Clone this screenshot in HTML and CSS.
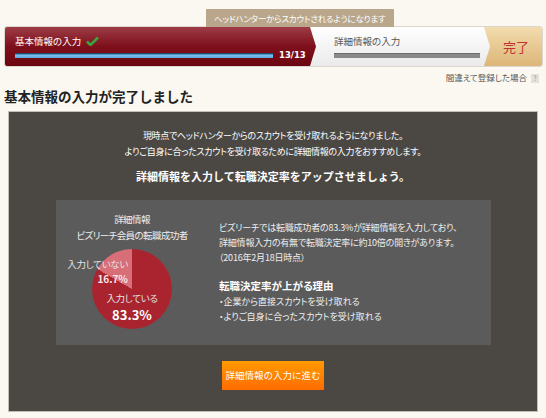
FILE: index.html
```html
<!DOCTYPE html>
<html lang="ja">
<head>
	<meta charset="UTF-8">
	<meta name="viewport" content="width=device-width, initial-scale=1.0">
	<title>基本情報の入力が完了しました</title>
	<link rel="stylesheet" href="styles.css">
</head>
<body>

	<!-- Tooltip above the steps -->
	<div class="tip-row">
		<div class="tip">ヘッドハンターからスカウトされるようになります</div>
	</div>

	<!-- Progress steps -->
	<div class="progress">
		<div class="step step-done">
			<div class="step-title">基本情報の入力
				<svg class="check" width="13" height="10" viewBox="0 0 13 10">
					<path d="M1 5.5 L4.5 9 L12 1.5" fill="none" stroke="#3aa43c" stroke-width="2.6"/>
				</svg>
			</div>
			<div class="step-meter">
				<div class="bar bar-blue"></div>
				<span class="count">13/13</span>
			</div>
		</div>
		<div class="step step-next">
			<div class="step-title">詳細情報の入力</div>
			<div class="step-meter">
				<div class="bar bar-gray"></div>
			</div>
		</div>
		<div class="step step-end">完了</div>
	</div>

	<div class="help">間違えて登録した場合 <span class="q">?</span></div>

	<h1 class="title">基本情報の入力が完了しました</h1>

	<!-- Main panel -->
	<div class="panel">
		<p class="lead">現時点でヘッドハンターからのスカウトを受け取れるようになりました。<br>よりご自身に合ったスカウトを受け取るために詳細情報の入力をおすすめします。</p>
		<p class="lead-strong">詳細情報を入力して転職決定率をアップさせましょう。</p>

		<div class="stats">
			<div class="chart-col">
				<div class="chart-title">詳細情報<br>ビズリーチ会員の転職成功者</div>
				<div class="pie">
					<div class="pie-label pie-small">
						<span class="pie-name">入力していない</span>
						<span class="pie-num">16.7%</span>
					</div>
					<div class="pie-label pie-big">
						<span class="pie-name">入力している</span>
						<span class="pie-num">83.3%</span>
					</div>
				</div>
			</div>
			<div class="info-col">
				<p class="info">ビズリーチでは転職成功者の83.3%が詳細情報を入力しており、<br>詳細情報入力の有無で転職決定率に約10倍の開きがあります。<br>（2016年2月18日時点）</p>
				<p class="info-head">転職決定率が上がる理由</p>
				<ul class="reasons">
					<li>・企業から直接スカウトを受け取れる</li>
					<li>・よりご自身に合ったスカウトを受け取れる</li>
				</ul>
			</div>
		</div>

		<div class="actions">
			<button type="button" class="btn">詳細情報の入力に進む</button>
		</div>
	</div>

</body>
</html>
```

FILE: styles.css
```css
body {
	margin: 0;
	padding: 0;
	background-color: #fbf8f1;
	font-family: "Noto Sans CJK JP", "Noto Sans", sans-serif;
	font-feature-settings: "palt";
	color: #333;
}
p {
	margin: 0;
}

/* tooltip */
.tip-row {
	padding-top: 3px;
	height: 23px;
}
.tip {
	position: relative;
	display: inline-block;
	margin-left: 206px;
	padding: 0 8px;
	height: 18px;
	line-height: 18px;
	background-color: #b9a68b;
	color: #fff;
	font-size: 8.5px;
	letter-spacing: -0.2px;
}
.tip::after {
	content: "";
	position: absolute;
	top: 100%;
	left: 90px;
	border-left: 4px solid transparent;
	border-right: 4px solid transparent;
	border-top: 4px solid #b9a68b;
}

/* steps */
.progress {
	display: flex;
	margin: 0 3px 0 4px;
	height: 41px;
	border: 1px solid #ddd8cf;
	border-radius: 3px;
	overflow: hidden;
	box-sizing: border-box;
}
.step {
	position: relative;
	box-sizing: border-box;
	padding-top: 7px;
}
.step-done {
	flex: 0 0 311px;
	padding-left: 10px;
	background: linear-gradient(#9d3c47, #7d0f1b 50%, #6b0610);
	color: #fff;
	clip-path: polygon(0 0, calc(100% - 6px) 0, 100% 50%, calc(100% - 6px) 100%, 0 100%);
	z-index: 3;
}
.step-next {
	flex: 0 0 180px;
	margin-left: -6px;
	padding-left: 24px;
	background: linear-gradient(#fefefe, #ebebeb);
	color: #555;
	clip-path: polygon(0 0, calc(100% - 6px) 0, 100% 50%, calc(100% - 6px) 100%, 0 100%);
	z-index: 2;
}
.step-end {
	flex: 1;
	margin-left: -6px;
	padding: 0 0 0 6px;
	background: linear-gradient(#f3dcae, #dcb677);
	color: #c1302f;
	font-size: 13px;
	display: flex;
	align-items: center;
	justify-content: center;
	z-index: 1;
}
.step-title {
	font-size: 9.5px;
	line-height: 14px;
	height: 14px;
	display: flex;
	align-items: center;
}
.check {
	margin-left: 5px;
}
.step-meter {
	display: flex;
	align-items: center;
	height: 12px;
	margin-top: 1px;
}
.bar {
	height: 5px;
	box-sizing: border-box;
}
.bar-blue {
	width: 258px;
	background: linear-gradient(#3d7fb5, #7cc0ec 40%, #5aa6dc);
	border-top: 1px solid #244a6b;
}
.bar-gray {
	width: 146px;
	background-color: #8a8a8a;
	border-top: 1px solid #6e6e6e;
}
.count {
	margin-left: 6px;
	font-size: 8.5px;
	font-weight: bold;
	font-family: "DejaVu Sans", sans-serif;
}

/* help link */
.help {
	text-align: right;
	margin-top: 4px;
	padding-right: 7px;
	font-size: 8.5px;
	line-height: 12px;
	color: #555;
}
.q {
	display: inline-block;
	width: 8px;
	height: 9px;
	line-height: 9px;
	margin-left: 2px;
	text-align: center;
	background-color: #e5e1d9;
	color: #9a958c;
	font-size: 7px;
}

.title {
	margin: 4px 4px 6px;
	font-size: 13.5px;
	line-height: 18px;
	color: #222;
	font-feature-settings: normal;
}

/* panel */
.panel {
	margin: 0 8px;
	padding: 16px 0 21px;
	background-color: #4b4843;
	border: 1px solid #c2beb6;
	color: #fff;
	text-align: center;
}
.lead {
	font-size: 9px;
	line-height: 16px;
	letter-spacing: -0.3px;
}
.lead-strong {
	margin-top: 8px;
	font-size: 11px;
	line-height: 16px;
	font-weight: bold;
	font-feature-settings: normal;
}
.stats {
	display: flex;
	margin: 16px 0 0 47px;
	width: 435px;
	height: 145px;
	background-color: #5b5b5b;
	text-align: left;
}
.chart-col {
	flex: 0 0 152px;
	padding-top: 11px;
	display: flex;
	flex-direction: column;
	align-items: center;
}
.chart-title {
	font-size: 9.5px;
	line-height: 16px;
	text-align: center;
	color: #eee;
	letter-spacing: -0.6px;
}
.pie {
	position: relative;
	margin-top: 6px;
	width: 80px;
	height: 80px;
	border-radius: 50%;
	background: conic-gradient(from -60deg, #d76e78 0 60deg, #a9242e 60deg 360deg);
}
.pie-label {
	position: absolute;
	display: flex;
	flex-direction: column;
	white-space: nowrap;
}
.pie-name {
	font-size: 9.5px;
	line-height: 14px;
	color: #e2e2e2;
	letter-spacing: -0.3px;
}
.pie-num {
	font-weight: bold;
	color: #fbe6e8;
}
.pie-small {
	left: -20px;
	top: 8px;
	align-items: flex-end;
	width: 56px;
}
.pie-small .pie-num {
	font-size: 10px;
	line-height: 15px;
}
.pie-big {
	left: 15px;
	top: 42px;
	width: 50px;
	align-items: center;
}
.pie-big .pie-num {
	font-size: 13px;
	line-height: 19px;
	color: #fff;
}
.info-col {
	padding: 20px 0 0 11px;
	color: #eee;
}
.info {
	font-size: 9px;
	line-height: 15px;
	letter-spacing: -0.2px;
}
.info-head {
	margin-top: 13px;
	font-size: 10.5px;
	line-height: 16px;
	font-weight: bold;
	color: #fff;
}
.reasons {
	margin: 0;
	padding: 0;
	list-style: none;
	font-size: 9px;
	line-height: 15px;
}

.actions {
	margin-top: 15px;
}
.btn {
	width: 102px;
	height: 29px;
	padding: 0;
	border: none;
	background: linear-gradient(#ff9a00, #ff6c00);
	color: #fff;
	font-family: inherit;
	font-size: 9.5px;
	cursor: pointer;
}
```
